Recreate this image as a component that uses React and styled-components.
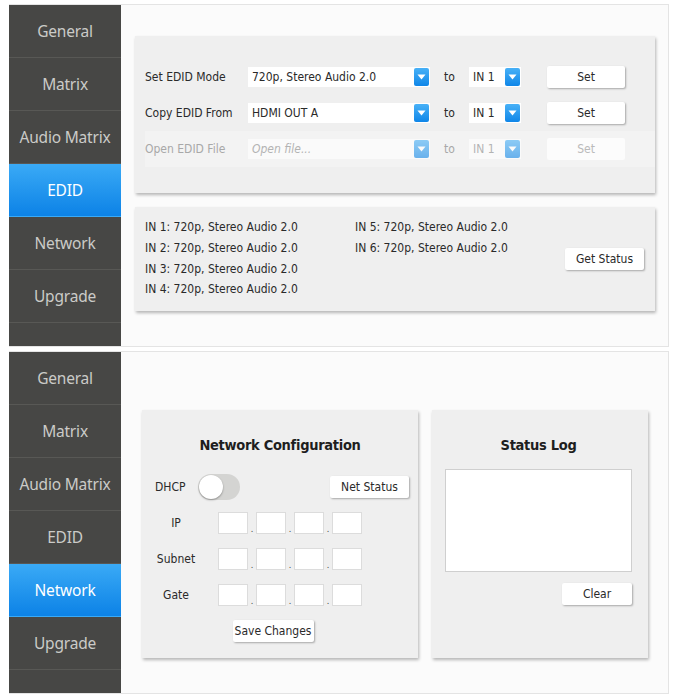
import React from "react";
import styled, { createGlobalStyle } from "styled-components";

const Global = createGlobalStyle`
  html, body { margin: 0; padding: 0; background: #ffffff; }
  body { font-family: "DejaVu Sans Condensed", "DejaVu Sans", sans-serif; }
  * { box-sizing: border-box; }
`;

const Page = styled.div`
  width: 678px;
  height: 698px;
  padding: 4px 0 0 9px;
  display: flex;
  flex-direction: column;
  gap: 4px;
  background: #ffffff;
`;

const Frame = styled.div`
  width: 660px;
  height: ${(p) => p.$h}px;
  flex: none;
  display: flex;
  border: 1px solid #e4e4e4;
  border-left: none;
  background: #fbfbfb;
`;

const Sidebar = styled.nav`
  width: 112px;
  flex: none;
  background: #474745;
  display: flex;
  flex-direction: column;
`;

const NavItem = styled.div`
  height: 53px;
  flex: none;
  display: flex;
  align-items: center;
  justify-content: center;
  font-family: "Noto Sans", "Open Sans", sans-serif;
  font-size: 15.5px;
  letter-spacing: -0.2px;
  color: ${(p) => (p.$active ? "#ffffff" : "#cbcbc8")};
  background: ${(p) =>
    p.$active ? "linear-gradient(#3aaaf6, #0c82e6)" : "transparent"};
  border-bottom: 1px solid ${(p) => (p.$active ? "transparent" : "#585855")};
`;

const Main = styled.div`
  flex: 1;
  display: flex;
  flex-direction: column;
  padding: ${(p) => p.$pad};
  gap: ${(p) => p.$gap || 0}px;
`;

const Card = styled.div`
  background: #efefef;
  box-shadow: 1px 2px 3px rgba(0, 0, 0, 0.28);
  height: ${(p) => p.$h}px;
  width: ${(p) => (p.$w ? `${p.$w}px` : "auto")};
  flex: none;
`;

const EdidCard = styled(Card)`
  padding: 23px 0 0 10px;
  display: flex;
  flex-direction: column;
`;

const EdidRow = styled.div`
  height: 36px;
  display: flex;
  align-items: center;
  font-size: 12px;
  color: ${(p) => (p.$disabled ? "#a8a8a8" : "#2a2a2a")};
  background: ${(p) => (p.$disabled ? "#f3f3f3" : "transparent")};
`;

const RowLabel = styled.span`
  width: 103px;
  flex: none;
`;

const SelectBox = styled.div`
  width: ${(p) => p.$w}px;
  height: 20px;
  flex: none;
  display: flex;
  align-items: center;
  background: #ffffff;
  opacity: ${(p) => (p.$disabled ? 0.6 : 1)};
`;

const SelectText = styled.span`
  flex: 1;
  padding-left: 4px;
  font-size: 12px;
  font-style: ${(p) => (p.$italic ? "italic" : "normal")};
  color: ${(p) => (p.$muted ? "#8a8a8a" : "#2a2a2a")};
  white-space: nowrap;
  overflow: hidden;
`;

const Arrow = styled.span`
  width: 15px;
  height: 18px;
  flex: none;
  margin-right: 1px;
  border-radius: 2px;
  background: linear-gradient(#48b1f7, #0f86e8);
  display: flex;
  align-items: center;
  justify-content: center;
`;

const To = styled.span`
  width: 39px;
  text-align: center;
  flex: none;
`;

const Btn = styled.button`
  width: ${(p) => p.$w}px;
  height: 22px;
  flex: none;
  border: none;
  border-radius: 2px;
  background: #ffffff;
  font-family: inherit;
  font-size: 12px;
  color: ${(p) => (p.$disabled ? "#a8a8a8" : "#2a2a2a")};
  margin-left: ${(p) => p.$ml || 0}px;
  padding: 0;
  opacity: ${(p) => (p.$disabled ? 0.75 : 1)};
  box-shadow: ${(p) =>
    p.$disabled ? "none" : "1px 1px 2px rgba(0, 0, 0, 0.3)"};
`;

const StatusCard = styled(Card)`
  display: flex;
  align-items: center;
  padding: 0 11px 0 10px;
`;

const StatusGrid = styled.div`
  flex: 1;
  display: grid;
  grid-template-columns: 210px 1fr;
  grid-auto-flow: column;
  grid-template-rows: repeat(4, 20.7px);
  font-size: 12px;
  color: #2a2a2a;
  align-items: center;
  align-self: flex-start;
  padding-top: 10px;
`;

const CardsRow = styled.div`
  display: flex;
  gap: 14px;
`;

const NetCard = styled(Card)`
  display: flex;
  flex-direction: column;
  align-items: stretch;
  padding-top: 25px;
`;

const CardTitle = styled.h2`
  margin: 0;
  height: 20px;
  line-height: 20px;
  text-align: center;
  font-size: 14.5px;
  font-weight: bold;
  color: #1e1e1e;
  letter-spacing: -0.3px;
`;

const NetRow = styled.div`
  height: 36px;
  display: flex;
  align-items: center;
  font-size: 12px;
  color: #2a2a2a;
`;

const DhcpRow = styled(NetRow)`
  margin-top: 14px;
  padding-left: 13px;
  padding-right: 9px;
`;

const FieldLabel = styled.span`
  width: 60px;
  padding-left: 8px;
  text-align: center;
  flex: none;
`;

const Toggle = styled.div`
  width: 42px;
  height: 26px;
  margin-left: 12px;
  border-radius: 13px;
  background: #d4d4d2;
  display: flex;
  align-items: center;
  padding: 1px;
`;

const Knob = styled.span`
  width: 24px;
  height: 24px;
  border-radius: 50%;
  background: #ffffff;
  box-shadow: 0 1px 2px rgba(0, 0, 0, 0.35);
`;

const Spacer = styled.span`
  flex: 1;
`;

const Octets = styled.div`
  display: flex;
  align-items: flex-end;
  margin-left: 16px;
`;

const Octet = styled.span`
  width: 30px;
  height: 22px;
  background: #ffffff;
  border: 1px solid #dcdcdc;
`;

const Dot = styled.span`
  width: 8px;
  text-align: center;
  font-size: 9px;
  line-height: 9px;
  color: #444;
`;

const SaveWrap = styled.div`
  display: flex;
  justify-content: center;
  margin-top: 7px;
  padding-right: 14px;
`;

const LogCard = styled(Card)`
  display: flex;
  flex-direction: column;
  padding: 25px 16px 0 13px;
`;

const LogBox = styled.div`
  margin-top: 14px;
  height: 103px;
  background: #ffffff;
  border: 1px solid #cfcfcf;
`;

const LogFoot = styled.div`
  display: flex;
  justify-content: flex-end;
  margin-top: 11px;
`;

const ArrowIcon = () => (
  <svg width="9" height="6" viewBox="0 0 9 6">
    <path d="M0.5 0.5 L8.5 0.5 L4.5 5.5 Z" fill="#ffffff" />
  </svg>
);

const navItems = ["General", "Matrix", "Audio Matrix", "EDID", "Network", "Upgrade"];

const Nav = ({ active }) => (
  <Sidebar>
    {navItems.map((n) => (
      <NavItem key={n} $active={n === active}>
        {n}
      </NavItem>
    ))}
  </Sidebar>
);

const Select = ({ w, text, italic, muted, disabled }) => (
  <SelectBox $w={w} $disabled={disabled}>
    <SelectText $italic={italic} $muted={muted}>
      {text}
    </SelectText>
    <Arrow>
      <ArrowIcon />
    </Arrow>
  </SelectBox>
);

const edidRows = [
  { label: "Set EDID Mode", value: "720p, Stereo Audio 2.0" },
  { label: "Copy EDID From", value: "HDMI OUT A" },
  { label: "Open EDID File", value: "Open file...", disabled: true },
];

const ins = [1, 2, 3, 4, 5, 6].map((i) => `IN ${i}: 720p, Stereo Audio 2.0`);

const ipRows = ["IP", "Subnet", "Gate"];

export default function App() {
  return (
    <>
      <Global />
      <Page>
        <Frame $h={343}>
          <Nav active="EDID" />
          <Main $pad="31px 0 0 14px" $gap={14}>
            <EdidCard $h={157} $w={520}>
              {edidRows.map((r) => (
                <EdidRow key={r.label} $disabled={r.disabled}>
                  <RowLabel>{r.label}</RowLabel>
                  <Select
                    w={182}
                    text={r.value}
                    italic={r.disabled}
                    muted={r.disabled}
                    disabled={r.disabled}
                  />
                  <To>to</To>
                  <Select w={52} text="IN 1" muted={r.disabled} disabled={r.disabled} />
                  <Btn $w={78} $ml={26} $disabled={r.disabled}>
                    Set
                  </Btn>
                </EdidRow>
              ))}
            </EdidCard>
            <StatusCard $h={104} $w={520}>
              <StatusGrid>
                {ins.map((t) => (
                  <span key={t}>{t}</span>
                ))}
              </StatusGrid>
              <Btn $w={79}>Get Status</Btn>
            </StatusCard>
          </Main>
        </Frame>
        <Frame $h={343}>
          <Nav active="Network" />
          <Main $pad="58px 0 0 21px">
            <CardsRow>
              <NetCard $h={248} $w={276}>
                <CardTitle>Network Configuration</CardTitle>
                <DhcpRow>
                  <span>DHCP</span>
                  <Toggle>
                    <Knob />
                  </Toggle>
                  <Spacer />
                  <Btn $w={79}>Net Status</Btn>
                </DhcpRow>
                {ipRows.map((l) => (
                  <NetRow key={l}>
                    <FieldLabel>{l}</FieldLabel>
                    <Octets>
                      <Octet />
                      <Dot>.</Dot>
                      <Octet />
                      <Dot>.</Dot>
                      <Octet />
                      <Dot>.</Dot>
                      <Octet />
                    </Octets>
                  </NetRow>
                ))}
                <SaveWrap>
                  <Btn $w={81}>Save Changes</Btn>
                </SaveWrap>
              </NetCard>
              <LogCard $h={248} $w={216}>
                <CardTitle>Status Log</CardTitle>
                <LogBox />
                <LogFoot>
                  <Btn $w={70}>Clear</Btn>
                </LogFoot>
              </LogCard>
            </CardsRow>
          </Main>
        </Frame>
      </Page>
    </>
  );
}
